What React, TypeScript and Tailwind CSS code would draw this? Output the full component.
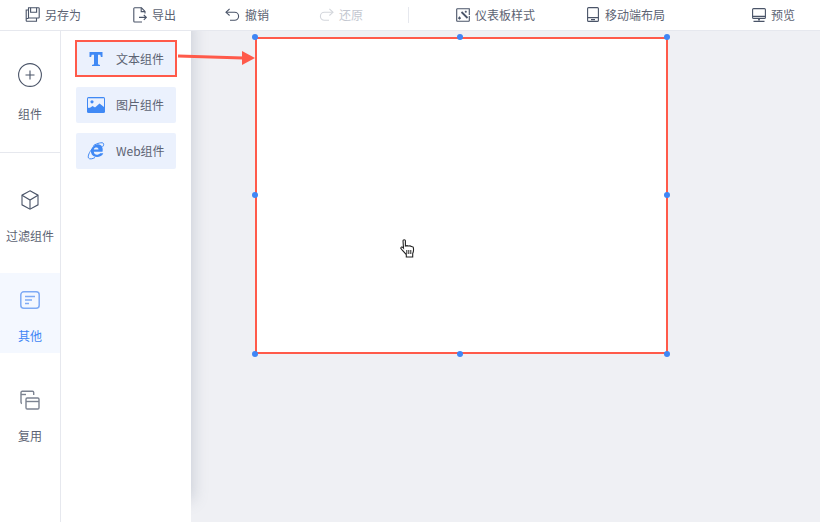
const font = { fontFamily: '"Noto Sans CJK SC", sans-serif' };

function ToolItem({ icon, label, disabled, className }: { icon: React.ReactNode; label: string; disabled?: boolean; className: string }) {
  return (
    <div className={`flex items-center text-[12px] leading-none ${disabled ? "text-[#c3c7d0]" : "text-[#5c6373]"} ${className}`}>
      {icon}
      <span>{label}</span>
    </div>
  );
}

const stroke = "#4a5468";

function SaveIcon() {
  return (
    <svg width="15" height="15" viewBox="0 0 15 15" fill="none" stroke={stroke} strokeWidth="1.1">
      <path d="M3.5 .8h10a.7.7 0 0 1 .7.7v8.8a.7.7 0 0 1-.7.7h-10z" />
      <path d="M5.6 .8v4.4h6V.8" />
      <path d="M3.5 3H1.2v10.5a.7.7 0 0 0 .7.7h9.6v-3.2" />
      <path d="M1.2 11.5h2.3" />
    </svg>
  );
}
function ExportIcon() {
  return (
    <svg width="14" height="16" viewBox="0 0 14 16" fill="none" stroke={stroke} strokeWidth="1.1">
      <path d="M9 15H1.6a.8.8 0 0 1-.8-.8V1.6a.8.8 0 0 1 .8-.8h6.9L12 4.4v2" />
      <path d="M8.2.8v3.8H12" />
      <path d="M6 10.4h7.4M10.8 8l2.6 2.4-2.6 2.4" />
    </svg>
  );
}
function UndoIcon({ color = stroke, flip = false }: { color?: string; flip?: boolean }) {
  return (
    <svg width="15" height="13" viewBox="0 0 15 13" fill="none" stroke={color} strokeWidth="1.1" style={flip ? { transform: "scaleX(-1)" } : undefined}>
      <path d="M4.6 .9 1 4.3l3.6 3.2" />
      <path d="M1 4.3h8.6a4 4 0 0 1 0 8H5" />
    </svg>
  );
}
function DashIcon() {
  return (
    <svg width="14" height="14" viewBox="0 0 14 14" fill="none" stroke={stroke} strokeWidth="1.1">
      <path d="M5 .7H1.4a.7.7 0 0 0-.7.7v11.2a.7.7 0 0 0 .7.7h11.2a.7.7 0 0 0 .7-.7V8" />
      <path d="M5 .7h8.3V7" />
      <path d="m5.5 4 6 6" strokeWidth="1.8" />
      <path d="M3.5 8.6v3M2 10.100h3M9.800 2.800v2M8.800 3.800h2" />
    </svg>
  );
}
function MobileIcon() {
  return (
    <svg width="12" height="15" viewBox="0 0 12 15" fill="none" stroke={stroke} strokeWidth="1.1">
      <rect x=".6" y=".6" width="10.800" height="13.800" rx="1" />
      <path d="M.6 10.600h10.800M4 12.600h4" />
    </svg>
  );
}
function PreviewIcon() {
  return (
    <svg width="14" height="14" viewBox="0 0 14 14" fill="none" stroke={stroke} strokeWidth="1.1">
      <rect x=".6" y=".6" width="12.800" height="9.800" rx="1" />
      <path d="M.6 8.400h12.800M1.500 13.400h11" />
      <path d="M7 10.400v2" strokeWidth="1.800" />
    </svg>
  );
}

function RailItem({ icon, label, active, className }: { icon: React.ReactNode; label: string; active?: boolean; className: string }) {
  return (
    <div className={`flex flex-col items-center text-[12px] leading-none ${active ? "bg-[#f4f8ff] text-[#3f86f5]" : "text-[#5c6373]"} ${className}`}>
      {icon}
      <span>{label}</span>
    </div>
  );
}

function PanelItem({ icon, label, outlined }: { icon: React.ReactNode; label: string; outlined?: boolean }) {
  return (
    <div className={`flex w-[100px] shrink-0 items-center bg-[#ebf1fd] text-[12px] text-[#5c6373] ${outlined ? "mb-px mt-px h-[35px] outline-2 -outline-offset-1 outline-[#ff5a4a]" : "h-9 rounded-[2px]"}`}>
      <span className="flex w-10 shrink-0 justify-center">{icon}</span>
      <span>{label}</span>
    </div>
  );
}

const dots = [
  "left-[-5px] top-[-5px]",
  "left-[200px] top-[-5px]",
  "left-[407px] top-[-5px]",
  "left-[-5px] top-[153px]",
  "left-[407px] top-[153px]",
  "left-[-5px] top-[312px]",
  "left-[200px] top-[312px]",
  "left-[407px] top-[312px]",
];

export default function App() {
  return (
    <div className="flex h-[522px] w-[820px] flex-col overflow-hidden bg-[#eff0f4]" style={font}>
      <header className="relative z-10 flex h-[31px] shrink-0 items-center border-b border-[#e6e8ee] bg-white pb-px">
        <ToolItem icon={<SaveIcon />} label="另存为" className="ml-[25px] gap-[5px]" />
        <ToolItem icon={<ExportIcon />} label="导出" className="ml-[52px] gap-[5px]" />
        <ToolItem icon={<UndoIcon />} label="撤销" className="ml-[49px] gap-[5px]" />
        <ToolItem icon={<UndoIcon color="#d3d6dc" flip />} label="还原" disabled className="ml-[50px] gap-[5px]" />
        <div className="ml-[45px] h-4 w-px bg-[#e6e8ee]" />
        <ToolItem icon={<DashIcon />} label="仪表板样式" className="ml-[47px] gap-[5px]" />
        <ToolItem icon={<MobileIcon />} label="移动端布局" className="ml-[52px] gap-[6px]" />
        <ToolItem icon={<PreviewIcon />} label="预览" className="ml-[87px] gap-[5px]" />
      </header>
      <div className="relative flex min-h-0 flex-1">
        <nav className="relative z-[1] flex w-[61px] shrink-0 flex-col border-r border-[#e6e8ee] bg-white">
          <RailItem
            className="h-[122px] border-b border-[#e6e8ee] pt-[32px]"
            label="组件"
            icon={
              <svg width="24" height="24" viewBox="0 0 24 24" fill="none" stroke={stroke} strokeWidth="1.1" className="mb-[21px]">
                <circle cx="12" cy="12" r="11.400" />
                <path d="M7.500 12h9M12 7.500v9" />
              </svg>
            }
          />
          <RailItem
            className="h-[120px] pt-[37px]"
            label="过滤组件"
            icon={
              <svg width="20" height="20" viewBox="0 0 20 20" fill="none" stroke={stroke} strokeWidth="1.1" className="mb-[20px]">
                <path d="M10 .8 18 5.200v9.600l-8 4.400-8-4.400V5.200z" />
                <path d="m2 5.200 8 4.800 8-4.800M10 10v9" />
              </svg>
            }
          />
          <RailItem
            active
            className="h-[80px] pt-[17px]"
            label="其他"
            icon={
              <svg width="20" height="20" viewBox="0 0 20 20" fill="none" stroke="#7fabf5" strokeWidth="1.500" className="mb-[20px]">
                <rect x=".8" y="1.800" width="18.400" height="16.400" rx="3" />
                <path d="M5 6.500h10M5 10h7M5 13.500h4" />
              </svg>
            }
          />
          <RailItem
            className="h-[120px] pt-[37px]"
            label="复用"
            icon={
              <svg width="20" height="20" viewBox="0 0 20 20" fill="none" stroke="#7c8391" strokeWidth="1.400" className="mb-[20px]">
                <path d="M2 13.500a1.200 1.200 0 0 1-1-1.200V2.500a1.200 1.200 0 0 1 1.200-1.200h10.300a1.200 1.200 0 0 1 1.200 1.200V5" />
                <path d="M1 4.500h5" />
                <rect x="6" y="8" width="13" height="11" rx="1.200" />
                <path d="M6 11.500h13" />
              </svg>
            }
          />
        </nav>
        <aside className="flex w-[130px] shrink-0 flex-col items-center gap-[10px] bg-white pt-[9px] shadow-[8px_-16px_14px_-6px_rgba(120,130,150,0.3)]">
          <PanelItem
            outlined
            label="文本组件"
            icon={
              <svg width="16" height="16" viewBox="0 0 16 16" fill="#4089f5">
                <path d="M1.500 1h13v5h-1.600l-.6-2.300H10v9.500l2 .7V15H4v-1.100l2-.7V3.700H3.700L3.100 6H1.500z" />
              </svg>
            }
          />
          <PanelItem
            label="图片组件"
            icon={
              <svg width="18" height="16" viewBox="0 0 18 16">
                <rect width="18" height="16" rx="1.500" fill="#4089f5" />
                <rect x="1" y="1.300" width="16" height="9.500" fill="#ebf1fd" />
                <circle cx="5" cy="4.800" r="1.600" fill="#4089f5" />
                <path d="M1 12.500 5.500 9 8 10.500 12.500 6.500 17 10v4.700H1z" fill="#4089f5" />
              </svg>
            }
          />
          <PanelItem
            label="Web组件"
            icon={
              <svg width="18" height="18" viewBox="0 0 18 18" fill="none">
                <path d="M15.500 9.800H6.800c.1 3.300 4.300 3.800 6.300 1.400h3.200c-2 5-10.800 5.200-12.200-.5C3 6 8 2 11 2.300c3.500 0 5.500 3.700 4.500 7.500Zm-4-2.400c-.1-2.400-4.200-2.500-4.700 0Z" fill="#4089f5" fillRule="evenodd" />
                <path d="M6.500 3.500C10 1.300 15.500-.2 16.500 1.500c.5 1 0 2.300-1 3.300M5 7C2.500 10 .5 14 1.500 16c1 1.500 4 1 6.500-.5" stroke="#4089f5" strokeWidth="1" />
              </svg>
            }
          />
        </aside>
        <section className="absolute left-[255px] top-[6px] h-[317px] w-[413px] border-2 border-[#ff5a4a] bg-white">
          {dots.map((d) => (
            <span key={d} className={`absolute h-[6px] w-[6px] rounded-full bg-[#3f86f5] ${d}`} />
          ))}
        </section>
        <svg width="80" height="16" viewBox="0 0 80 16" className="absolute left-[177px] top-[19px]" fill="#ff5a4a">
          <path d="M1 6 66 8" stroke="#ff5a4a" strokeWidth="3" />
          <path d="M65 1 78 8 65 15z" />
        </svg>
        <svg width="16" height="19" viewBox="0 0 16 19" className="absolute left-[400px] top-[208px]" fill="#fff" stroke="#222" strokeWidth="1.100">
          <path d="M3 1.800c0-1.400 2.400-1.400 2.400 0V7l1.600-.4 1.500.4 1.500-.1 1.500.5 1.700.7c.6 2.200.5 4.200-.5 6.400v3.500H6.300v-2.500L2.500 11.500.8 9.300c0-1.400 1.200-1.800 2.200-.8l.5.600z" />
          <path d="M6.800 11v4M8.800 11v4M10.800 11v4" strokeWidth="1" />
        </svg>
      </div>
    </div>
  );
}
